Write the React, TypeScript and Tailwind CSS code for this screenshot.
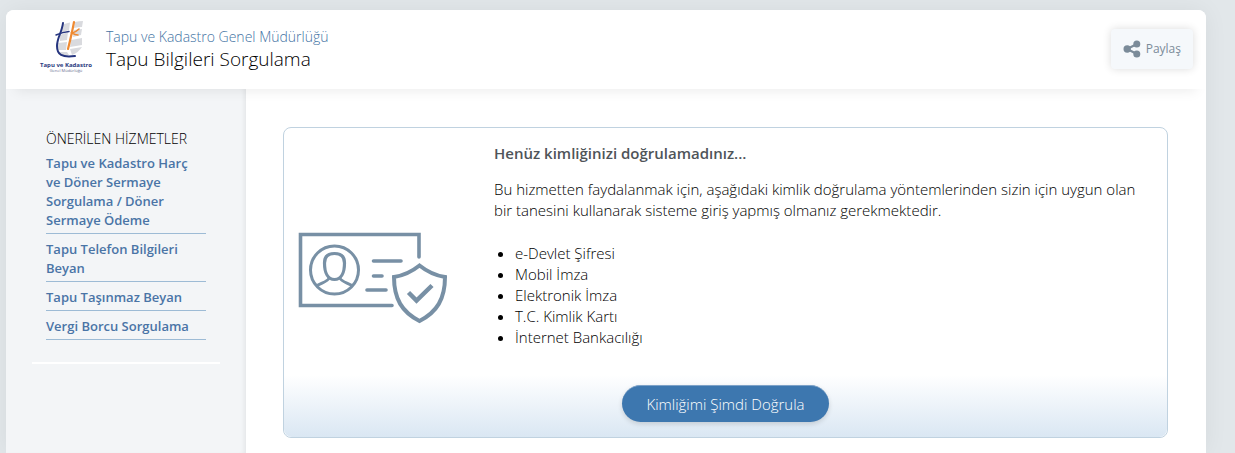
import React from 'react';

const services = [
  'Tapu ve Kadastro Harç ve Döner Sermaye Sorgulama / Döner Sermaye Ödeme',
  'Tapu Telefon Bilgileri Beyan',
  'Tapu Taşınmaz Beyan',
  'Vergi Borcu Sorgulama',
];

const methods = [
  'e-Devlet Şifresi',
  'Mobil İmza',
  'Elektronik İmza',
  'T.C. Kimlik Kartı',
  'İnternet Bankacılığı',
];

function Logo() {
  return (
    <svg viewBox="0 0 56 60" className="h-[60px] w-14 shrink-0" role="img" aria-label="Tapu ve Kadastro">
      <g fill="#d9dade">
        <path d="M24 6 Q28 4 32 3.500 L31 11 Q27 12 23 14Z" />
        <path d="M37 3 Q41 2 45 2 L44 8 Q40 8 36 9Z" />
        <path d="M22 16 L30 13 L29 21 L22 22Z" />
        <path d="M36 11 L44 10 L43 16 L35 18Z" />
        <path d="M20 24 L29 23 L28 31 L20 31Z" />
        <path d="M33 21 L44 19 L44 26 L32 28Z" />
        <path d="M20 33 L29 33 L31 36 L23 37Z" />
        <path d="M32 30 L44 28 Q41 33 34 36Z" />
      </g>
      <g fill="none" strokeLinecap="round">
        <path d="M25 4 C24 13 19 19 19 27 C19 36 24 38.500 37 37" stroke="#26357f" strokeWidth="2" />
        <path d="M18 16 Q25 13 31 12.500" stroke="#26357f" strokeWidth="1.500" />
        <path d="M36 3 Q34 14 30 30" stroke="#ef8a32" strokeWidth="2.200" />
        <path d="M41 10 Q38 13 34 14 Q37 16 40 16" stroke="#ef8a32" strokeWidth="1.600" />
      </g>
      <text x="28" y="48" textAnchor="middle" fontSize="6" fontWeight="700" fill="#2b3a80" fontFamily="Open Sans, sans-serif">
        Tapu ve Kadastro
      </text>
      <text x="28" y="53" textAnchor="middle" fontSize="4" fill="#6b7192" fontFamily="Open Sans, sans-serif">
        Genel Müdürlüğü
      </text>
    </svg>
  );
}

function ShareIcon() {
  return (
    <svg viewBox="0 0 18 18" className="size-[18px]" fill="#7b8b99" aria-hidden="true">
      <path d="M4 9 L14 4 M4 9 L14 14" stroke="#7b8b99" strokeWidth="2.200" />
      <circle cx="4.200" cy="9" r="3.700" />
      <circle cx="13.800" cy="4" r="3.500" />
      <circle cx="13.800" cy="14" r="3.500" />
    </svg>
  );
}

function IdentityIcon() {
  return (
    <svg viewBox="0 0 150 92" className="mb-6 h-[92px] w-[150px] shrink-0" fill="none" stroke="#7890a5" strokeWidth="3.600" aria-hidden="true">
      <path d="M121 25 V2.500 H2.500 V73.500 H94" strokeLinecap="round" />
      <circle cx="36.500" cy="38" r="24" strokeWidth="3" />
      <path d="M26.500 31 C26.500 24 30 21.500 36.500 21.500 S46.500 24 46.500 31 C46.500 41 43 47.500 36.500 47.500 S26.500 41 26.500 31Z" strokeWidth="3.200" />
      <path d="M31 46 C30 50 22 51 18.500 54 M42 46 C43 50 51 51 54.500 54" strokeWidth="3" />
      <path d="M75.500 29 H103 M75.500 44 H84 M69 58 H88" strokeLinecap="round" />
      <path d="M121.500 33.500 C114 39.500 106 43.500 96 45 C96 67 104 80 121.500 89 C139 80 147 67 147 45 C137 43.500 129 39.500 121.500 33.500Z" strokeWidth="4" />
      <path d="M110.500 60.500 L118.500 68.500 L134 53.500" strokeWidth="4.500" />
    </svg>
  );
}

export default function App() {
  return (
    <div className="flex min-h-screen bg-[#e2e7ea] pt-[10px] pr-[29px] pl-[6px] font-['Open_Sans',sans-serif] text-black">
      <div className="flex min-w-0 flex-1 flex-col rounded-t-lg bg-white shadow-[0_0_24px_rgba(0,0,0,0.06)]">
        <header className="relative flex items-center gap-3 rounded-t-lg bg-white pt-[9px] pr-[13px] pb-[10px] pl-8 shadow-[0_12px_12px_-10px_rgba(0,0,0,0.08)]">
          <Logo />
          <h1 className="flex-1 text-[19px] leading-6 font-light">
            <a href="#kurum" className="block text-[14px] leading-5 text-[#4474a4]">
              Tapu ve Kadastro Genel Müdürlüğü
            </a>
            Tapu Bilgileri Sorgulama
          </h1>
          <button
            type="button"
            className="flex h-10 items-center gap-[5px] rounded-sm bg-[#f5f8fb] px-3 text-[12px] text-[#7b8b99] shadow-[0_0_8px_rgba(0,0,0,0.14)]"
          >
            <ShareIcon />
            Paylaş
          </button>
        </header>

        <div className="flex flex-1">
          <aside className="w-60 shrink-0 bg-[#f3f5f7] px-[26px] pt-10 shadow-[inset_-4px_0_4px_-2px_rgba(0,0,0,0.06)]">
            <div className="border-b-2 border-white px-[14px] pb-[22px]">
              <h2 className="text-[14px] leading-5 font-light">ÖNERİLEN HİZMETLER</h2>
              <ul className="flex flex-col gap-[6px] pt-[5px] text-[13px] leading-[19px] font-semibold text-[#4a74a6]">
                {services.map((service) => (
                  <li key={service} className="border-b border-[#9dbbd5] pb-[3px]">
                    <a href="#hizmet" className="block pr-3">{service}</a>
                  </li>
                ))}
              </ul>
            </div>
          </aside>

          <main className="min-w-0 flex-1 pt-[38px] pr-[38px] pb-[15px] pl-[37px]">
            <section className="rounded-lg border border-[#c0d2e0]">
              <div className="flex items-end px-[14px] pt-[15px] pb-[27px] text-[15px] leading-[21px]">
                <IdentityIcon />
                <div className="flex-1 pl-[46px]">
                  <h2 className="font-semibold text-[#4f5459]">Henüz kimliğinizi doğrulamadınız...</h2>
                  <p className="pt-[15px] font-light">
                    Bu hizmetten faydalanmak için, aşağıdaki kimlik doğrulama yöntemlerinden sizin için uygun olan bir
                    tanesini kullanarak sisteme giriş yapmış olmanız gerekmektedir.
                  </p>
                  <ul className="list-disc pt-[22px] pl-[21px] font-light">
                    {methods.map((method) => (
                      <li key={method}>{method}</li>
                    ))}
                  </ul>
                </div>
              </div>
              <div className="flex justify-center rounded-b-lg bg-linear-to-b from-white to-[#dae7f3] pt-[10px] pb-[15px]">
                <button
                  type="button"
                  className="h-[37px] rounded-full border-t border-[#7da2c8] bg-[#3d77af] px-6 text-[15px] font-light text-white shadow-[0_2px_5px_rgba(0,0,0,0.14)]"
                >
                  Kimliğimi Şimdi Doğrula
                </button>
              </div>
            </section>
          </main>
        </div>
      </div>
    </div>
  );
}
